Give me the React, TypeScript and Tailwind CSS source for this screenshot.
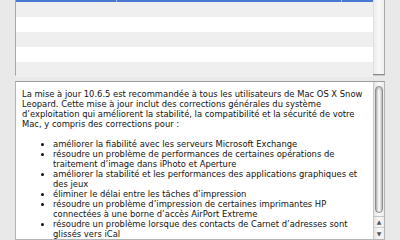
import { ReactNode } from "react";

const items: ReactNode[] = [
  "améliorer la fiabilité avec les serveurs Microsoft Exchange",
  "résoudre un problème de performances de certaines opérations de traitement d’image dans iPhoto et Aperture",
  "améliorer la stabilité et les performances des applications graphiques et des jeux",
  "éliminer le délai entre les tâches d’impression",
  "résoudre un problème d’impression de certaines imprimantes HP connectées à une borne d’accès AirPort Extreme",
  "résoudre un problème lorsque des contacts de Carnet d’adresses sont glissés vers iCal",
];

function Scroller() {
  return (
    <div className="w-[11px] shrink-0 flex flex-col border-l border-[#c8c8c8] bg-gradient-to-r from-[#e4e4e4] via-[#fafafa] to-[#ececec]">
      <div className="flex-1 px-[1px] pt-[4px] pb-[3px]">
        {/* thumb */}
        <div className="h-[127px] rounded-full border border-[#8c8c8c] bg-gradient-to-r from-[#b8b8b8] via-[#fdfdfd] to-[#c4c4c4] shadow-[inset_0_2px_2px_rgba(0,0,0,0.15)]" />
      </div>
      <div className="h-[11px] flex items-center justify-center border-t border-[#c4c4c4] text-[#555] text-[6px] leading-none">
        ▲
      </div>
      <div className="h-[12px] flex items-center justify-center border-t border-[#d0d0d0] text-[#555] text-[6px] leading-none">
        ▼
      </div>
    </div>
  );
}

export default function App() {
  const rows = [0, 1, 2, 3, 4];
  return (
    <div className="w-[400px] h-[240px] overflow-hidden bg-[#e9e9e9] flex flex-col font-['DejaVu_Sans',sans-serif]">
      {/* update list */}
      <div className="mx-[15px] h-[75px] shrink-0 flex border-l border-r border-b border-l-[#a8a8a8] border-r-[#a8a8a8] border-b-[#8a8a8a] bg-white shadow-[0_1px_0_#c9c9c9]">
        <div className="flex-1 flex flex-col">
          <div className="h-[2px] shrink-0 bg-[#4a78d0] relative">
            <span className="absolute left-[100px] top-0 h-[2px] w-px bg-[#9fb8e8]" />
            <span className="absolute left-[325px] top-0 h-[2px] w-px bg-[#9fb8e8]" />
          </div>
          {rows.map((i) => (
            <div key={i} className={`h-[15px] shrink-0 ${i % 2 === 0 ? "bg-[#efefef]" : "bg-white"}`} />
          ))}
        </div>
        <div className="w-[11px] shrink-0 bg-gradient-to-r from-[#ececec] via-[#f8f8f8] to-[#efefef] border-l border-[#e0e0e0]" />
      </div>

      {/* release notes */}
      <div className="mx-[15px] mt-[6px] flex-1 flex border border-t-[#9c9c9c] border-x-[#b4b4b4] border-b-[#b4b4b4] bg-white min-h-0">
        <div className="flex-1 pl-[6px] pr-[2px] pt-[7px] text-[8.4px] leading-[10px] text-[#111] overflow-hidden">
          <p>
            La mise à jour 10.6.5 est recommandée à tous les utilisateurs de Mac OS X Snow Leopard. Cette mise à jour inclut des corrections générales du système d’exploitation qui améliorent la stabilité, la compatibilité et la sécurité de votre Mac, y compris des corrections pour :
          </p>
          <ul className="mt-[10px] pl-[31px] pr-[12px] list-disc">
            {items.map((t, i) => (
              <li key={i}>{t}</li>
            ))}
          </ul>
        </div>
        <Scroller />
      </div>
    </div>
  );
}
